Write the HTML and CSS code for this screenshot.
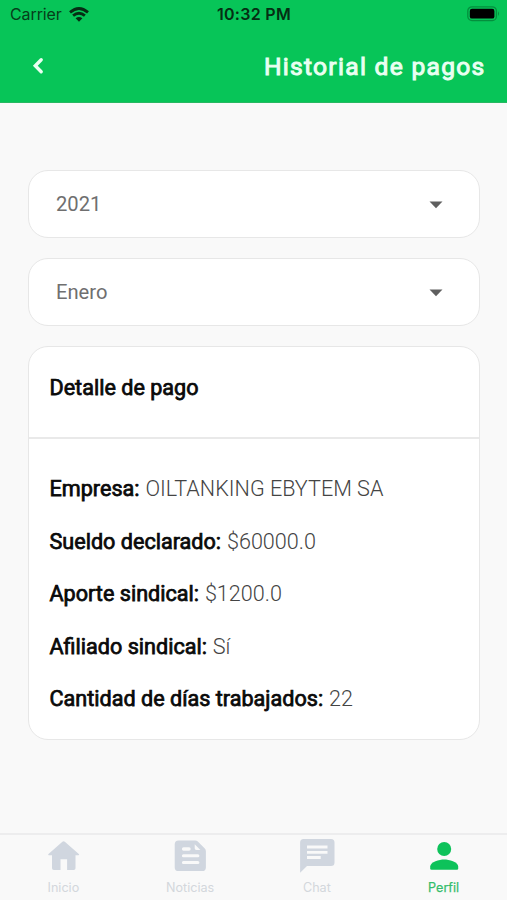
FILE: index.html
```html
<!DOCTYPE html>
<html lang="es">
<head>
<meta charset="utf-8">
<title>Historial de pagos</title>
<link rel="stylesheet" href="styles.css">
</head>
<body>
<div class="app">
  <header class="header">
    <div class="status">
      <div class="carrier"><span>Carrier</span>
        <svg width="20" height="15" viewBox="0 0 20 15"><g fill="none" stroke="#062d14" stroke-width="2.8"><path d="M1 5.4Q10-2.4 19 5.400"/><path d="M4.100 8.700Q10 3.800 15.900 8.700"/></g><path d="M6.600 11.300Q10 8.500 13.400 11.300L10 14.700Z" fill="#062d14"/></svg>
      </div>
      <time class="clock">10:32 PM</time>
      <svg class="battery" width="33" height="16" viewBox="0 0 33 16"><rect x=".8" y=".8" width="28.6" height="13.8" rx="4.2" fill="none" stroke="#048f3d" stroke-width="1.3"/><rect x="2.8" y="2.8" width="24.6" height="9.8" rx="2.2" fill="#000"/><path d="M31 5.3q2 2.4 0 4.8z" fill="#048f3d"/></svg>
    </div>
    <div class="navbar">
      <svg class="back" width="12" height="18" viewBox="0 0 12 18"><path d="M9.200 2.800 3.300 8.700l5.900 6" fill="none" stroke="#e9fff1" stroke-width="3.400" stroke-linecap="round"/></svg>
      <h1>Historial de pagos</h1>
    </div>
  </header>
  <main class="content">
    <div class="select"><span>2021</span><svg width="14" height="8" viewBox="0 0 14 8"><path d="M.5.5h13L7 7.3z" fill="#5f5f5f"/></svg></div>
    <div class="select"><span>Enero</span><svg width="14" height="8" viewBox="0 0 14 8"><path d="M.5.5h13L7 7.3z" fill="#5f5f5f"/></svg></div>
    <section class="card">
      <h2>Detalle de pago</h2>
      <div class="details">
        <p><b>Empresa:</b> OILTANKING EBYTEM SA</p>
        <p><b>Sueldo declarado:</b> $60000.0</p>
        <p><b>Aporte sindical:</b> $1200.0</p>
        <p><b>Afiliado sindical:</b> Sí</p>
        <p><b>Cantidad de días trabajados:</b> 22</p>
      </div>
    </section>
  </main>
  <nav class="tabs">
    <a class="tab"><svg viewBox="0 0 36 36"><path d="M17.400 3.700q1.200-1.100 2.400 0L33.800 16q1 1.200-.5 1.200H30.500v13q0 1.800-1.800 1.800h-6.600V21.200h-6.600V32H8.800Q7 32 7 30.200v-13H4q-1.500 0-.5-1.200z"/></svg><span>Inicio</span></a>
    <a class="tab"><svg viewBox="0 0 36 36"><path fill-rule="evenodd" d="M6.600 2.500H23.200q1.500 0 2.600 1.100l7 7q1.100 1.100 1.100 2.600V29.200a3.900 3.900 0 0 1-3.900 3.900H6.600a3.900 3.900 0 0 1-3.900-3.900V6.400a3.900 3.900 0 0 1 3.900-3.900zM11.600 9.300a1.700 1.700 0 0 0 0 3.400h5.400a1.700 1.700 0 0 0 0-3.400zM11.400 16.300a1.500 1.500 0 0 0 0 3h14.500a1.500 1.500 0 0 0 0-3zm0 6.600a1.500 1.500 0 0 0 0 3h14.500a1.500 1.500 0 0 0 0-3zM22.700 6.300v4q0 1.700 1.700 1.700h4z"/></svg><span>Noticias</span></a>
    <a class="tab"><svg viewBox="0 0 36 36"><path fill-rule="evenodd" d="M4.600 1H32a3.500 3.500 0 0 1 3.500 3.500V24.500A3.500 3.500 0 0 1 32 28H8L1.100 34.700V4.500A3.500 3.500 0 0 1 4.600 1zM8 7.600v2.900h20.500V7.600zm0 5.300v2.900h20.500v-2.900zm0 5.200v2.900h13.700v-2.900z"/></svg><span>Chat</span></a>
    <a class="tab active"><svg viewBox="0 0 36 36"><circle cx="18.200" cy="11" r="7"/><path d="M4.200 30.500v-2c0-4.700 9.300-7.100 14-7.100s14 2.400 14 7.100v2q0 1.300-1.300 1.300H5.500q-1.300 0-1.300-1.300z"/></svg><span>Perfil</span></a>
  </nav>
</div>
</body>
</html>
```
FILE: styles.css
```css
* { box-sizing: border-box; }
body { margin: 0; font-family: Roboto, sans-serif; background: #f9f9f9; }
svg { display: block; }
.app { height: 900px; display: flex; flex-direction: column; }
.header { height: 103px; background: #07c558; border-bottom: 1px solid #27b862; }
.status {
  height: 28px; padding: 0 7px 0 10px;
  display: grid; grid-template-columns: 1fr auto 1fr; align-items: center;
  font-family: Inter, sans-serif; font-size: 16px; color: #063d1a;
}
.carrier { display: flex; align-items: center; gap: 7px; letter-spacing: -.1px; }
.clock { margin-right: 2px; font-weight: 600; letter-spacing: .3px; color: #052e13; }
.battery { justify-self: end; }
.navbar { height: 76px; padding: 0 21.5px 0 32px; display: flex; align-items: center; justify-content: space-between; }
h1 { margin: 0; font-size: 24.6px; font-weight: 400; letter-spacing: 1.28px; color: #e9fff1; -webkit-text-stroke: 1px #e9fff1; }
.content { flex: 1; padding: 67px 27px 0 28px; }
.select {
  height: 68px; margin-bottom: 20px; padding: 0 36.5px 0 27px;
  display: flex; align-items: center; justify-content: space-between;
  background: #fff; border: 1.5px solid #e7e7e7; border-radius: 20px;
  font-size: 20.2px; color: #6f6f6f;
}
.select svg { margin-top: 1px; }
.card { height: 394px; background: #fff; border: 1.5px solid #e7e7e7; border-radius: 20px; }
h2 { margin: 0; height: 92px; padding: 0 20.5px; line-height: 82px; border-bottom: 2px solid #e9e9e9; }
h2, b { font-size: 21.6px; font-weight: 400; color: #0a0a0a; -webkit-text-stroke: .75px #0a0a0a; }
.details { padding: 24px 20.5px; font-size: 21.6px; font-weight: 300; color: #444; }
.details p { margin: 0; line-height: 52.6px; white-space: nowrap; }
b { margin-right: .6px; }
.tabs { height: 67px; display: grid; grid-template-columns: repeat(4, 1fr); border-top: 2px solid #ededee; }
.tab { padding-top: 3px; display: flex; flex-direction: column; align-items: center; font: 12.6px/16px Inter, sans-serif; color: #d3d7dc; }
.tab svg { width: 36px; height: 36px; fill: #d0d6df; }
.tab span { margin-top: 6px; }
.tab.active { color: #35bd6c; -webkit-text-stroke: .25px #35bd6c; }
.tab.active svg { fill: #0dc25a; }
```
